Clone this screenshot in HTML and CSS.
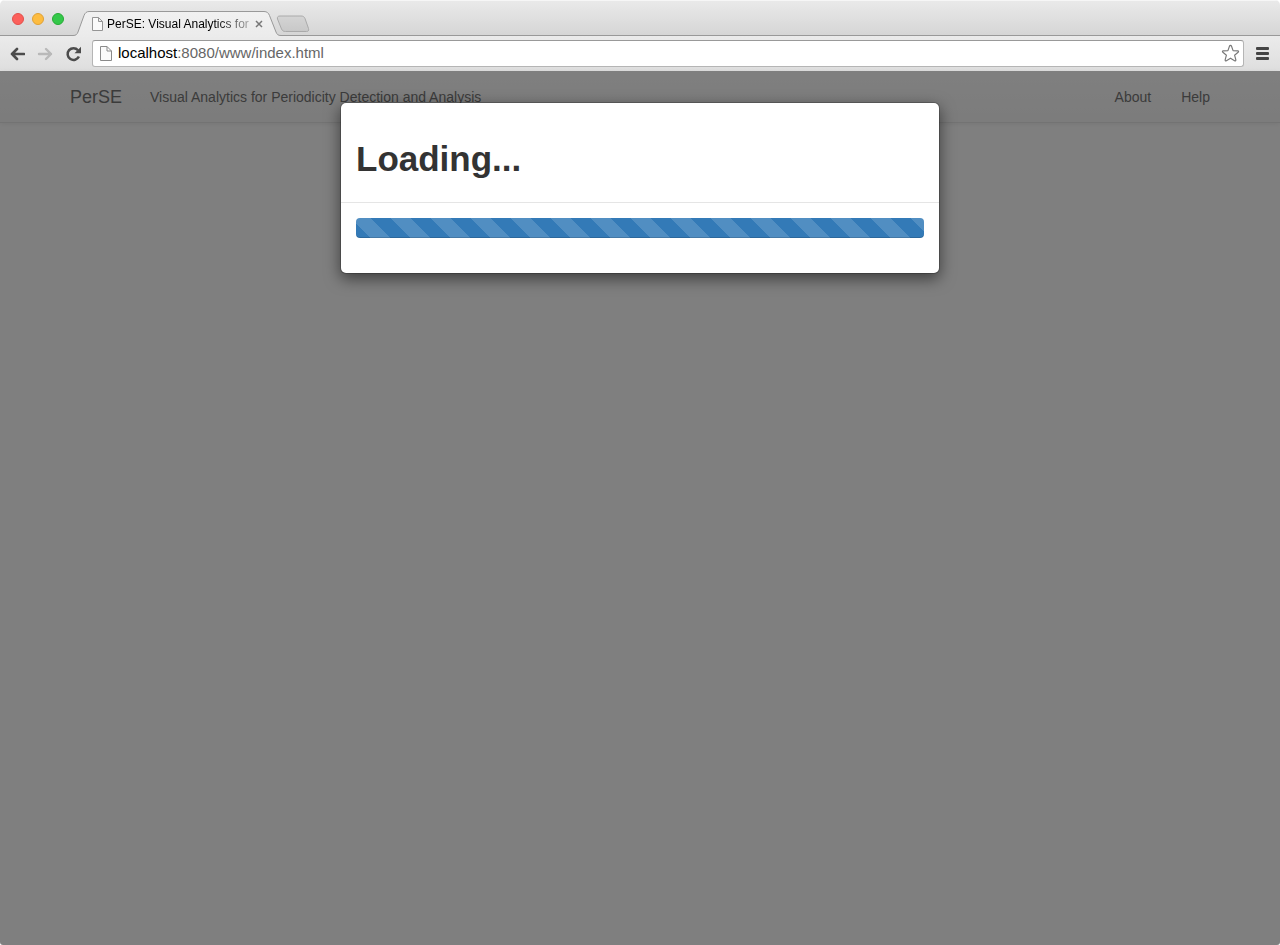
FILE: index.html
```html
<!DOCTYPE html>
<html lang="en">
<head>
<meta charset="utf-8">
<title>PerSE: Visual Analytics for Periodicity Detection and Analysis</title>
<link rel="stylesheet" href="styles.css">
</head>
<body>
<div class="window">
  <header class="chrome">
    <div class="tabstrip">
      <div class="lights">
        <button class="light light-close" aria-label="Close window"></button>
        <button class="light light-min" aria-label="Minimize window"></button>
        <button class="light light-zoom" aria-label="Zoom window"></button>
      </div>
      <div class="tab">
        <svg class="tab-shape" viewBox="0 0 208 26" aria-hidden="true">
          <defs><linearGradient id="tabfill" x1="0" y1="0" x2="0" y2="1"><stop offset="0" stop-color="#f1f1f1"/><stop offset="1" stop-color="#ebebeb"/></linearGradient></defs>
          <path d="M0 26V24.500C3 24.500 4 23.500 5 21L11 4.500C12 2 13.500 0.500 16 0.500H191C194 0.500 195.500 2 196.500 4.500L203 21C204 23.500 205 24.500 208 24.500V26Z" fill="url(#tabfill)"/>
          <path d="M0 24.500C3 24.500 4 23.500 5 21L11 4.500C12 2 13.500 0.500 16 0.500H191C194 0.500 195.500 2 196.500 4.500L203 21C204 23.500 205 24.500 208 24.500" fill="none" stroke="#999"/>
        </svg>
        <svg class="tab-icon" viewBox="0 0 12 15" aria-hidden="true"><path d="M1.500 1.500H7.500L11.500 5.500V14.500H1.500ZM7.500 1.500V5.500H11.500" fill="#fafafa" stroke="#959595"/></svg>
        <span class="tab-title">PerSE: Visual Analytics for</span>
        <button class="tab-close" aria-label="Close tab"><svg viewBox="0 0 8 8" aria-hidden="true"><path d="M1 1L7 7M7 1L1 7" stroke="#777" stroke-width="1.500"/></svg></button>
      </div>
      <button class="new-tab" aria-label="New tab"><svg viewBox="0 0 34 18" aria-hidden="true"><defs><linearGradient id="newfill" x1="0" y1="0" x2="0" y2="1"><stop offset="0" stop-color="#d4d4d4"/><stop offset="1" stop-color="#c8c8c8"/></linearGradient></defs><path d="M4 1H25C27 1 28 1.500 29 3.500L32.500 13.500C33 15.500 32.500 16.500 30.500 16.500H9.500C7.500 16.500 6.500 16 5.500 14L1.500 4C1 2 2 1 4 1Z" fill="url(#newfill)" stroke="#aaa"/></svg></button>
    </div>
    <div class="toolbar">
      <button class="tool" aria-label="Back"><svg viewBox="0 0 16 16" aria-hidden="true"><path d="M15 8H3M8 3L3 8L8 13" fill="none" stroke="#4c4c4c" stroke-width="2.600" stroke-linecap="round" stroke-linejoin="round"/></svg></button>
      <button class="tool" aria-label="Forward" disabled><svg viewBox="0 0 16 16" aria-hidden="true"><path d="M2 8H14M9 3L14 8L9 13" fill="none" stroke="#b9b9b9" stroke-width="2.400" stroke-linecap="round" stroke-linejoin="round"/></svg></button>
      <button class="tool" aria-label="Reload"><svg viewBox="0 0 16 16" aria-hidden="true"><path d="M13 4.200A5.900 5.900 0 1 0 13.900 10.500" fill="none" stroke="#4c4c4c" stroke-width="2.500"/><path d="M16 .8V7.200H9.500Z" fill="#4c4c4c"/></svg></button>
      <div class="omnibox">
        <svg class="page-icon" viewBox="0 0 12 15" aria-hidden="true"><path d="M.5 .5H7L11.500 5V14.500H.5ZM7 .5V5H11.500" fill="#fafafa" stroke="#8a8a8a"/></svg>
        <a class="url" href="#"><span class="host">localhost</span>:8080/www/index.html</a>
        <button class="star" aria-label="Bookmark this page"><svg viewBox="0 0 20 20" aria-hidden="true"><path d="M10 1.500Q10.800 1.500 11.100 2.400L12.700 7L17.600 7.200Q19.200 7.500 18 8.700L14.300 11.800L15.600 16.600Q15.800 18.200 14.300 17.600L10 14.900L5.700 17.600Q4.200 18.200 4.400 16.600L5.700 11.800L2 8.700Q.8 7.500 2.400 7.200L7.300 7L8.900 2.400Q9.200 1.500 10 1.500Z" fill="#fff" stroke="#777" stroke-width="1.200" stroke-linejoin="round"/></svg></button>
      </div>
      <button class="menu" aria-label="Menu"><svg viewBox="0 0 13 13" aria-hidden="true"><g fill="#444"><rect width="13" height="3" rx="1"/><rect y="5" width="13" height="3" rx="1"/><rect y="10" width="13" height="3" rx="1"/></g></svg></button>
    </div>
  </header>
  <main class="page">
    <nav class="navbar">
      <div class="container">
        <a class="brand" href="#">PerSE</a>
        <span class="tagline">Visual Analytics for Periodicity Detection and Analysis</span>
        <a class="nav-link" href="#">About</a>
        <a class="nav-link" href="#">Help</a>
      </div>
    </nav>
    <div class="backdrop">
      <section class="dialog" role="dialog" aria-labelledby="dialog-title">
        <div class="dialog-header"><h1 class="dialog-title" id="dialog-title">Loading...</h1></div>
        <div class="dialog-body"><div class="progress" role="progressbar" aria-labelledby="dialog-title"></div></div>
      </section>
    </div>
  </main>
</div>
</body>
</html>
```
FILE: styles.css
```css
* { box-sizing: border-box; }

body {
  margin: 0;
  background: #fff;
  font-family: "Liberation Sans", Arial, sans-serif;
  font-size: 14px;
  line-height: 20px;
  color: #333;
}

button {
  padding: 0;
  border: 0;
  background: none;
}

svg { display: block; width: 100%; height: 100%; }

a { color: inherit; text-decoration: none; }

.window {
  display: flex;
  flex-direction: column;
  min-height: 100vh;
  border-radius: 5px 5px 3px 3px;
  overflow: hidden;
}

/* Browser frame */
.tabstrip {
  display: flex;
  align-items: flex-end;
  height: 36px;
  background: linear-gradient(#eaeaea, #d5d5d5);
  box-shadow: inset 0 1px #f6f6f6, inset 0 -1px #999;
}

.lights {
  display: flex;
  gap: 8px;
  padding: 0 12px 11px;
}

.light {
  width: 12px;
  height: 12px;
  border: 1px solid;
  border-radius: 50%;
}

.light-close { background: #fc605b; border-color: #e2504b; }
.light-min { background: #fdbc40; border-color: #dfa136; }
.light-zoom { background: #34c84a; border-color: #27aa35; }

.tab {
  position: relative;
  display: flex;
  align-items: center;
  width: 208px;
  height: 25px;
  margin-left: -3px;
  padding: 0 14px 0 18px;
}

.tab-shape { position: absolute; top: 0; left: 0; width: 208px; height: 26px; }

.tab-icon { position: relative; width: 12px; height: 15px; flex: none; }

.tab-title {
  position: relative;
  flex: 1;
  margin: 0 3px 0 4px;
  white-space: nowrap;
  font-size: 12px;
  color: #000;
  mask-image: linear-gradient(to right, #000 108px, rgba(0, 0, 0, .25) 144px);
}

.tab-close { position: relative; width: 8px; height: 8px; margin-right: 4px; }

.new-tab { width: 34px; height: 18px; margin: 0 0 3px -5px; }

.toolbar {
  display: flex;
  align-items: center;
  gap: 12px;
  height: 35px;
  padding: 0 11px 0 9px;
  background: linear-gradient(#ebebeb, #dedede);
}

.tool { width: 16px; height: 16px; }

.omnibox {
  display: flex;
  flex: 1;
  align-items: center;
  height: 27px;
  margin: 0 0 1px -1px;
  padding: 0 3px 0 7px;
  border: 1px solid #b5b5b5;
  border-top-color: #999;
  border-radius: 3px;
  background: #fff;
}

.page-icon { width: 12px; height: 15px; }
.url { flex: 1; margin-left: 6px; font-size: 15px; color: #666; }
.host { color: #000; }
.star { width: 19px; height: 19px; }
.menu { width: 13px; height: 13px; }

/* Page */
.page {
  position: relative;
  flex: 1;
  background: #fff;
}

.navbar {
  border-bottom: 1px solid #e7e7e7;
  background: linear-gradient(#fff, #f8f8f8);
  box-shadow: 0 1px 5px rgba(0, 0, 0, .075);
}

.container {
  display: flex;
  align-items: center;
  gap: 30px;
  max-width: 1170px;
  height: 51px;
  margin: 0 auto;
  padding: 0 15px;
  color: #777;
}

.brand { width: 50px; font-size: 18px; }
.tagline { flex: 1; }

.backdrop {
  position: absolute;
  inset: 0;
  display: flex;
  align-items: flex-start;
  justify-content: center;
  padding-top: 31px;
  background: rgba(0, 0, 0, .5);
}

.dialog {
  width: 600px;
  border: 1px solid rgba(0, 0, 0, .2);
  border-radius: 6px;
  background: #fff;
  background-clip: padding-box;
  box-shadow: 0 5px 15px rgba(0, 0, 0, .5);
}

.dialog-header {
  padding: 15px;
  border-bottom: 1px solid #e5e5e5;
}

.dialog-title {
  margin: 21px 0 8px;
  font-size: 35px;
  font-weight: bold;
  line-height: 40px;
}

.dialog-body { padding: 15px; }

.progress {
  height: 20px;
  margin-bottom: 20px;
  border-radius: 4px;
  background-color: #337ab7;
  background-image: linear-gradient(45deg, rgba(255, 255, 255, .15) 25%, transparent 25%, transparent 50%, rgba(255, 255, 255, .15) 50%, rgba(255, 255, 255, .15) 75%, transparent 75%, transparent);
  background-position: -5px 0;
  background-size: 40px 40px;
  box-shadow: inset 0 -1px rgba(0, 0, 0, .15);
}
```
